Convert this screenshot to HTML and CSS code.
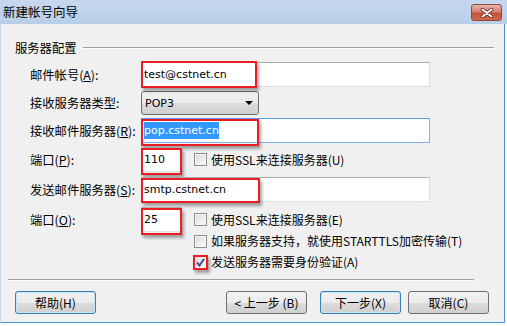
FILE: index.html
```html
<!DOCTYPE html>
<html>
<head>
  <meta charset="UTF-8">
  <title>新建帐号向导</title>
  <link rel="stylesheet" href="styles.css">
</head>
<body>
  <div class="window">
    <div class="titlebar">
      <span class="title">新建帐号向导</span>
      <span class="close">
        <svg width="14" height="10" viewBox="0 0 14 10">
          <path d="M2.5 1.5 L11.5 8.5 M11.5 1.5 L2.5 8.5" stroke="#6b2a1e" stroke-width="3.6" stroke-linecap="round"/>
          <path d="M2.5 1.5 L11.5 8.5 M11.5 1.5 L2.5 8.5" stroke="#fff" stroke-width="2" stroke-linecap="round"/>
        </svg>
      </span>
    </div>

    <div class="client">
      <div class="group-head">
        <span>服务器配置</span>
        <span class="rule"></span>
      </div>

      <div class="form">
        <div class="row r1">
          <span class="lbl">邮件帐号(<u>A</u>):</span>
          <div class="field wide">
            <span class="val">test@cstnet.cn</span>
            <span class="mark m-long"></span>
          </div>
        </div>

        <div class="row r2">
          <span class="lbl">接收服务器类型:</span>
          <div class="select">
            <span class="val">POP3</span>
            <span class="arrow"></span>
          </div>
        </div>

        <div class="row r3">
          <span class="lbl">接收邮件服务器(<u>R</u>):</span>
          <div class="field wide focus">
            <span class="val sel">pop.cstnet.cn</span>
            <span class="mark m-long2"></span>
          </div>
        </div>

        <div class="row r4">
          <span class="lbl">端口(<u>P</u>):</span>
          <div class="field port">
            <span class="val">110</span>
            <span class="mark m-port"></span>
          </div>
          <span class="check"></span>
          <span class="check-lbl">使用SSL来连接服务器(U)</span>
        </div>

        <div class="row r5">
          <span class="lbl">发送邮件服务器(<u>S</u>):</span>
          <div class="field wide">
            <span class="val">smtp.cstnet.cn</span>
            <span class="mark m-long3"></span>
          </div>
        </div>

        <div class="row r6">
          <span class="lbl">端口(<u>O</u>):</span>
          <div class="field port">
            <span class="val">25</span>
            <span class="mark m-port"></span>
          </div>
          <span class="check"></span>
          <span class="check-lbl">使用SSL来连接服务器(E)</span>
        </div>

        <div class="row r7 indent">
          <span class="check"></span>
          <span class="check-lbl">如果服务器支持，就使用STARTTLS加密传输(T)</span>
        </div>

        <div class="row r8 indent">
          <span class="check checked">
            <svg width="9" height="9" viewBox="0 0 9 9">
              <path d="M1 4.5 L3.5 7.5 L8 1" fill="none" stroke="#3f4f88" stroke-width="2"/>
            </svg>
            <span class="mark m-check"></span>
          </span>
          <span class="check-lbl">发送服务器需要身份验证(A)</span>
        </div>
      </div>

      <div class="separator"></div>

      <div class="buttons">
        <span class="btn default">帮助(H)</span>
        <span class="spacer"></span>
        <span class="btn">&lt; 上一步 (B)</span>
        <span class="btn default next">下一步(X)</span>
        <span class="btn cancel">取消(C)</span>
      </div>
    </div>
  </div>
</body>
</html>
```

FILE: styles.css
```css
body {
  margin: 0;
  font-family: "Noto Sans CJK SC", "DejaVu Sans", sans-serif;
  font-size: 12px;
  line-height: 16px;
  color: #000;
  background: #fff;
}
* {
  box-sizing: border-box;
}
.window {
  width: 507px;
  height: 326px;
  background: #fff;
  overflow: hidden;
}
.titlebar {
  height: 24px;
  display: flex;
  align-items: center;
  justify-content: space-between;
  padding: 0 5px 0 3px;
  background: linear-gradient(#c6d8ee, #b8cee8);
}
.title {
  font-size: 12.5px;
}
.close {
  width: 31px;
  height: 17px;
  margin-top: 1px;
  border: 1px solid #8c4a3c;
  border-radius: 3px;
  display: flex;
  align-items: center;
  justify-content: center;
  background: linear-gradient(#e6b2a8, #d58371 45%, #c5533a 55%, #d06b4e);
}
.client {
  height: 299px;
  width: 505px;
  background: #f0f0f0;
  border-left: 1px solid #c9d8e8;
  border-right: 1px solid #3c9ad8;
  border-bottom: 1px solid #3c9ad8;
  padding-top: 16px;
}
.group-head {
  display: flex;
  align-items: center;
  height: 16px;
  padding-left: 14px;
  padding-right: 10px;
  font-size: 12.3px;
}
.group-head .rule {
  flex: 1;
  margin-left: 6px;
  border-top: 1px solid #a0a0a0;
  border-bottom: 1px solid #fff;
}
.form {
  padding-left: 29px;
  display: flex;
  flex-direction: column;
}
.row {
  display: flex;
  align-items: center;
  height: 25px;
}
.r1 { margin-top: 6px; }
.r2 { margin-top: 4px; height: 24px; }
.r3 { margin-top: 3px; }
.r4 { margin-top: 4px; }
.r5 { margin-top: 5px; }
.r6 { margin-top: 5px; }
.r7 { margin-top: 1px; height: 16px; }
.r8 { margin-top: 5px; height: 16px; }
.indent {
  padding-left: 164px;
}
.lbl {
  width: 111px;
  flex: none;
  font-size: 12.3px;
}
.field {
  position: relative;
  height: 25px;
  background: #fff;
  border: 1px solid #dbdfe6;
  border-top-color: #abadb3;
  padding-left: 2px;
  display: flex;
  align-items: center;
}
.field.wide {
  width: 289px;
}
.field.focus {
  border-color: #7eb4ea;
  border-top-color: #569de5;
}
.field.port {
  width: 41px;
}
.val {
  font-family: "DejaVu Sans", sans-serif;
  font-size: 11px;
  line-height: 15px;
}
.val.sel {
  background: #3399ff;
  color: #fff;
  padding: 1px 0;
}
.mark {
  position: absolute;
  top: -2px;
  left: -1px;
  height: 27px;
  border: 2px solid #ec1c24;
  box-shadow: 2px 3px 3px rgba(0, 0, 0, 0.35);
}
.m-long { width: 116px; }
.m-long2 { width: 118px; top: 0; }
.m-long3 { width: 119px; top: 0; height: 25px; }
.m-port { width: 41px; top: 0; }
.select {
  width: 118px;
  height: 24px;
  border: 1px solid #707070;
  border-radius: 3px;
  background: linear-gradient(#f2f2f2, #ebebeb 50%, #dddddd 51%, #cfcfcf);
  display: flex;
  align-items: center;
  justify-content: space-between;
  padding: 0 5px 0 3px;
}
.arrow {
  width: 0;
  height: 0;
  border-left: 4px solid transparent;
  border-right: 4px solid transparent;
  border-top: 4px solid #000;
}
.check {
  position: relative;
  width: 13px;
  height: 13px;
  flex: none;
  margin-left: 12px;
  border: 1px solid #8f8f8f;
  background: linear-gradient(135deg, #dcdcdc, #fbfbfb);
  box-shadow: inset 0 0 0 1px #f4f4f4;
  display: flex;
  align-items: center;
  justify-content: center;
}
.indent .check {
  margin-left: 0;
}
.check .m-check {
  top: -2px;
  left: -2px;
  width: 15px;
  height: 15px;
}
.check-lbl {
  margin-left: 4px;
  font-size: 12px;
}
.separator {
  margin: 9px 30px 0 7px;
  border-top: 1px solid #a0a0a0;
  border-bottom: 1px solid #fff;
}
.buttons {
  display: flex;
  margin-top: 10px;
  padding: 0 15px 0 14px;
}
.spacer {
  flex: 1;
}
.btn {
  width: 81px;
  height: 23px;
  border: 1px solid #707070;
  border-radius: 3px;
  background: linear-gradient(#f2f2f2, #ebebeb 50%, #dddddd 51%, #cfcfcf);
  display: flex;
  align-items: center;
  justify-content: center;
  font-size: 12px;
}
.btn.default {
  border-color: #3c7fb1;
  box-shadow: inset 0 0 0 1px #c6e6f8;
}
.next {
  margin-left: 13px;
}
.cancel {
  margin-left: 7px;
}
```
